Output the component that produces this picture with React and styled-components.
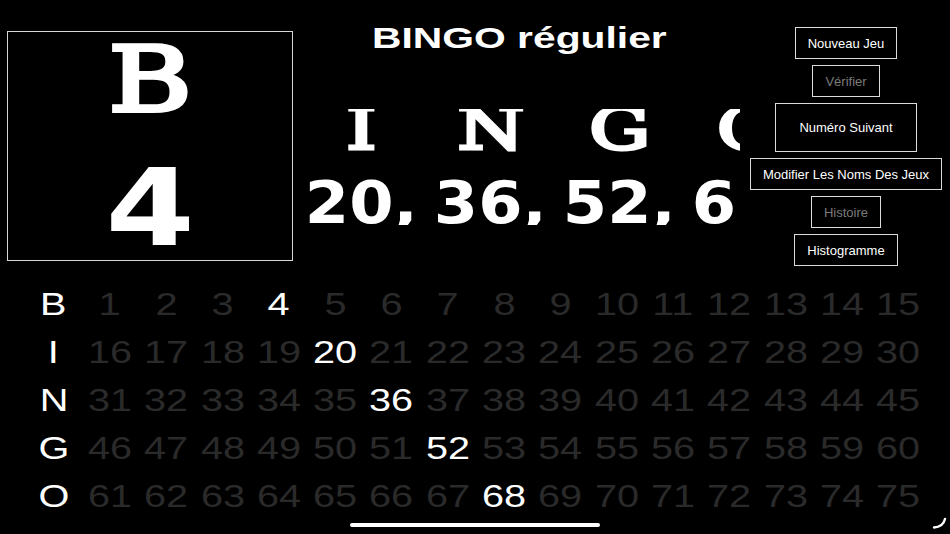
import React from "react";
import styled, { createGlobalStyle, css } from "styled-components";

const Global = createGlobalStyle`
  html, body { margin: 0; padding: 0; background: #000; overflow: hidden; }
  #root { width: 950px; height: 534px; }
`;

const stretch = (k) => css`
  display: inline-block;
  transform: scaleX(${k});
  transform-origin: center;
`;

const Screen = styled.div`
  position: relative;
  width: 950px;
  height: 534px;
  background: #000;
  color: #fff;
  display: flex;
  flex-direction: column;
  overflow: hidden;
  font-family: "Liberation Sans", Arial, sans-serif;
`;

const Top = styled.div`
  height: 280px;
  display: grid;
  grid-template-columns: 286px 449px 1fr;
  padding-left: 7px;
  box-sizing: border-box;
`;

const CurrentBox = styled.div`
  margin-top: 31px;
  height: 230px;
  border: 1px solid #d6d6d6;
  box-sizing: border-box;
  display: flex;
  flex-direction: column;
  align-items: center;
  padding-top: 15px;
`;

const SlabLetter = styled.div`
  font-family: "DejaVu Serif", serif;
  font-weight: 400;
  font-size: ${(p) => p.$size}px;
  line-height: ${(p) => Math.round(p.$size * 0.72)}px;
  height: ${(p) => Math.round(p.$size * 0.72)}px;
  text-align: center;
  -webkit-text-stroke: ${(p) => p.$stroke}px #fff;
  span { ${(p) => stretch(p.$k)} }
`;

const BoldNumber = styled.div`
  font-family: "DejaVu Sans", "Liberation Sans", sans-serif;
  font-weight: 700;
  font-size: ${(p) => p.$size}px;
  line-height: 0.75;
  margin-top: ${(p) => p.$gap}px;
  text-align: center;
  white-space: nowrap;
  span { ${(p) => stretch(p.$k)} }
`;

const Middle = styled.div`
  display: flex;
  flex-direction: column;
  align-items: center;
  padding-top: 23px;
  margin-left: 4px;
  min-width: 0;
`;

const Title = styled.h1`
  margin: 0;
  font-size: 30px;
  line-height: 30px;
  font-weight: 700;
  white-space: nowrap;
  span { ${stretch(1.36)} }
`;

const Ticker = styled.div`
  align-self: flex-start;
  margin-top: 56px;
  display: flex;
  overflow: hidden;
  width: 443px;
`;

const TickerItem = styled.div`
  flex: 0 0 129px;
  display: flex;
  flex-direction: column;
  align-items: center;
`;

const Actions = styled.div`
  display: flex;
  flex-direction: column;
  align-items: center;
  gap: 6px;
  padding-top: 27px;
`;

const Button = styled.button`
  background: transparent;
  border: 1px solid #dcdcdc;
  border-radius: 0;
  color: ${(p) => (p.disabled ? "#7c7c7c" : "#fff")};
  font-family: "Liberation Sans", Arial, sans-serif;
  font-size: 13px;
  line-height: 15px;
  padding: ${(p) => (p.$primary ? "16px 23px" : "7.5px 12px")};
  white-space: nowrap;
  cursor: pointer;
`;

const Board = styled.div`
  display: grid;
  grid-template-columns: repeat(16, 56.3px);
  grid-auto-rows: 48px;
  margin-left: 25.5px;
`;

const Cell = styled.div`
  font-size: 30.5px;
  line-height: 48px;
  text-align: center;
  white-space: nowrap;
  color: ${(p) => (p.$on ? "#fff" : "#2a2a2a")};
  span { ${stretch(1.3)} }
`;

const HomeIndicator = styled.div`
  position: absolute;
  left: 350px;
  top: 523px;
  width: 250px;
  height: 4px;
  border-radius: 2px;
  background: #fff;
`;

const CornerMark = styled.svg`
  position: absolute;
  left: 932px;
  top: 514px;
`;

const LETTERS = ["B", "I", "N", "G", "O"];
const CALLED = [4, 20, 36, 52, 68];

export default function App() {
  return (
    <Screen>
      <Global />
      <Top>
        <CurrentBox>
          <SlabLetter $size={90} $k={1.26} $stroke={4.2}><span>B</span></SlabLetter>
          <BoldNumber $size={107} $k={1.2} $gap={56}><span>4</span></BoldNumber>
        </CurrentBox>
        <Middle>
          <Title><span>BINGO régulier</span></Title>
          <Ticker>
            {[20, 36, 52, 68].map((n, i) => (
              <TickerItem key={n}>
                <SlabLetter $size={57} $k={1.34} $stroke={3.2}><span>{LETTERS[i + 1]}</span></SlabLetter>
                <BoldNumber $size={59} $k={1.08} $gap={31}><span>{n},</span></BoldNumber>
              </TickerItem>
            ))}
          </Ticker>
        </Middle>
        <Actions>
          <Button>Nouveau Jeu</Button>
          <Button disabled>Vérifier</Button>
          <Button $primary>Numéro Suivant</Button>
          <Button>Modifier Les Noms Des Jeux</Button>
          <Button disabled>Histoire</Button>
          <Button>Histogramme</Button>
        </Actions>
      </Top>
      <Board>
        {LETTERS.map((L, r) => (
          <React.Fragment key={L}>
            <Cell $on><span>{L}</span></Cell>
            {Array.from({ length: 15 }, (_, c) => {
              const n = r * 15 + c + 1;
              return (
                <Cell key={n} $on={CALLED.includes(n)}>
                  <span>{n}</span>
                </Cell>
              );
            })}
          </React.Fragment>
        ))}
      </Board>
      <HomeIndicator />
      <CornerMark width="16" height="16" viewBox="0 0 16 16">
        <path d="M2 13.5 Q11 13 13 5" fill="none" stroke="#fff" strokeWidth="2.4" strokeLinecap="round" />
      </CornerMark>
    </Screen>
  );
}
